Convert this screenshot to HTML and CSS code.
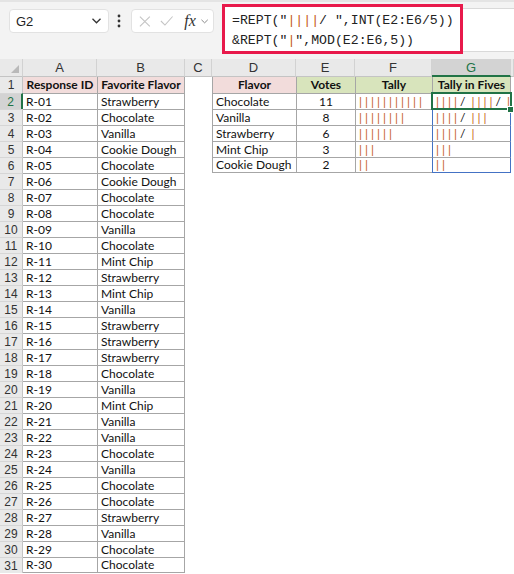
FILE: index.html
```html
<!DOCTYPE html>
<html lang="en">
<head>
    <meta charset="UTF-8">
    <meta name="viewport" content="width=device-width, initial-scale=1.0">
    <title>Tally in Fives</title>
    <link rel="stylesheet" href="styles.css">
</head>
<body>
    <div class="toolbar">
        <div class="name-box">
            <span>G2</span>
            <svg width="9" height="6" viewBox="0 0 9 6"><polyline points="0.5,0.8 4.5,4.8 8.5,0.8" fill="none" stroke="#333" stroke-width="1.3"/></svg>
        </div>
        <svg class="dots" width="4" height="14" viewBox="0 0 4 14">
            <circle cx="2" cy="2" r="1.4"/><circle cx="2" cy="7" r="1.4"/><circle cx="2" cy="12" r="1.4"/>
        </svg>
        <div class="fx-box">
            <svg width="13" height="13" viewBox="0 0 13 13"><path d="M1 1 L12 12 M12 1 L1 12" stroke="#c4c4c4" stroke-width="1.2" fill="none"/></svg>
            <svg width="15" height="12" viewBox="0 0 15 12"><polyline points="1,6 5.5,10.5 14,1" stroke="#c4c4c4" stroke-width="1.2" fill="none"/></svg>
            <span class="fx">fx</span>
            <svg width="8" height="5" viewBox="0 0 8 5"><polyline points="0.5,0.6 4,4 7.5,0.6" fill="none" stroke="#888" stroke-width="1.1"/></svg>
        </div>
        <div class="formula">
            <div class="formula-text">
                <div class="line">=REPT("<span class="pipe">||||</span>/ ",INT(E2:E6/5))</div>
                <div class="line">&amp;REPT("<span class="pipe">|</span>",MOD(E2:E6,5))</div>
            </div>
            <div class="formula-rest"></div>
        </div>
    </div>

    <table class="sheet">
        <colgroup>
            <col style="width: 23px">
            <col style="width: 74px">
            <col style="width: 88px">
            <col style="width: 27px">
            <col style="width: 84px">
            <col style="width: 59px">
            <col style="width: 77px">
            <col style="width: 79px">
            <col style="width: 3px">
        </colgroup>
        <thead>
            <tr>
                <th class="corner"><svg width="8" height="8" viewBox="0 0 8 8"><polygon points="8,0 8,8 0,8" fill="#b9b9b9"/></svg></th>
                <th class="col-head">A</th>
                <th class="col-head">B</th>
                <th class="col-head">C</th>
                <th class="col-head">D</th>
                <th class="col-head">E</th>
                <th class="col-head">F</th>
                <th class="col-head selected">G</th>
                <th class="col-head"></th>
            </tr>
        </thead>
        <tbody id="rows"></tbody>
    </table>

    <script>
        const responses = [
            ['R-01', 'Strawberry'], ['R-02', 'Chocolate'], ['R-03', 'Vanilla'],
            ['R-04', 'Cookie Dough'], ['R-05', 'Chocolate'], ['R-06', 'Cookie Dough'],
            ['R-07', 'Chocolate'], ['R-08', 'Chocolate'], ['R-09', 'Vanilla'],
            ['R-10', 'Chocolate'], ['R-11', 'Mint Chip'], ['R-12', 'Strawberry'],
            ['R-13', 'Mint Chip'], ['R-14', 'Vanilla'], ['R-15', 'Strawberry'],
            ['R-16', 'Strawberry'], ['R-17', 'Strawberry'], ['R-18', 'Chocolate'],
            ['R-19', 'Vanilla'], ['R-20', 'Mint Chip'], ['R-21', 'Vanilla'],
            ['R-22', 'Vanilla'], ['R-23', 'Chocolate'], ['R-24', 'Vanilla'],
            ['R-25', 'Chocolate'], ['R-26', 'Chocolate'], ['R-27', 'Strawberry'],
            ['R-28', 'Vanilla'], ['R-29', 'Chocolate'], ['R-30', 'Chocolate']
        ];
        const flavors = ['Chocolate', 'Vanilla', 'Strawberry', 'Mint Chip', 'Cookie Dough'];
        const votes = flavors.map(f => responses.filter(r => r[1] === f).length);

        function pipes(n) {
            return n > 0 ? '<span class="pipe">' + '|'.repeat(n) + '</span>' : '';
        }

        // =REPT("||||/ ",INT(n/5)) & REPT("|",MOD(n,5))
        function fives(n) {
            let out = '';
            for (let i = 0; i < Math.floor(n / 5); i++) {
                out += pipes(4) + '/ ';
            }
            return out + pipes(n % 5);
        }

        function cell(text, classes) {
            return `<td class="${classes}">${text}</td>`;
        }

        let html = '';
        for (let r = 1; r <= 31; r++) {
            const top = r > 1 ? ' bt' : '';
            html += `<tr><th class="row-head${r === 2 ? ' selected' : ''}">${r}</th>`;

            // responses list A:B
            const last = r === 31 ? ' bb' : '';
            if (r === 1) {
                html += cell('Response ID', 'head pink' + last);
                html += cell('Favorite Flavor', 'head pink bl br' + last);
            } else {
                html += cell(responses[r - 2][0], 'grid' + top + last);
                html += cell(responses[r - 2][1], 'grid bl br' + top + last);
            }

            html += cell('', '');

            // summary D:G
            if (r === 1) {
                html += cell('Flavor', 'head pink bl');
                html += cell('Votes', 'head green bl');
                html += cell('Tally', 'head green bl');
                html += cell('Tally in Fives', 'head green bl br');
            } else if (r <= 6) {
                const n = votes[r - 2];
                const end = r === 6 ? ' bb' : '';
                html += cell(flavors[r - 2], 'grid bl' + top + end);
                html += cell(n, 'grid num bl' + top + end);
                html += cell(pipes(n), 'grid tally bl' + top + end);
                html += cell(fives(n), 'grid tally bl br spill' + top + end + (r === 2 ? ' active' : ''));
            } else {
                html += cell('', '') + cell('', '') + cell('', '') + cell('', '');
            }

            html += cell('', '') + '</tr>';
        }
        document.getElementById('rows').innerHTML = html;
    </script>
</body>
</html>
```

FILE: styles.css
```css
body {
    margin: 0;
    background-color: #ffffff;
    font-family: "Liberation Sans", Arial, sans-serif;
    color: #222222;
    width: 514px;
    height: 574px;
    overflow: hidden;
}

/* formula bar */
.toolbar {
    display: flex;
    align-items: flex-start;
    height: 59px;
    box-sizing: border-box;
    padding-left: 9px;
    background-color: #f3f3f3;
    border-top: 2px solid #e4e4e4;
}

.name-box {
    display: flex;
    align-items: center;
    justify-content: space-between;
    width: 100px;
    height: 24px;
    margin-top: 7px;
    padding: 0 7px 0 6px;
    box-sizing: border-box;
    background-color: #ffffff;
    border: 1px solid #e2e2e2;
    border-radius: 4px;
    font-size: 13px;
    color: #1f1f1f;
}

.dots {
    margin: 12px 0 0 8px;
    fill: #333333;
}

.fx-box {
    display: flex;
    align-items: center;
    width: 83px;
    height: 24px;
    margin: 7px 0 0 10px;
    padding: 0 5px 0 7px;
    box-sizing: border-box;
    background-color: #ffffff;
    border: 1px solid #e2e2e2;
    border-radius: 4px;
    gap: 9px;
}

.fx-box .fx {
    font-family: "Liberation Serif", "Times New Roman", serif;
    font-style: italic;
    font-size: 16px;
    color: #333333;
    margin-left: 2px;
    margin-right: -4px;
}

.formula {
    display: flex;
    flex: 1;
    margin-left: 8px;
}

.formula-text {
    width: 241px;
    height: 50px;
    margin-top: 2px;
    padding: 4px 0 0 7px;
    box-sizing: border-box;
    background-color: #ffffff;
    border: 3px solid #e8194b;
    font-family: "Liberation Mono", "Courier New", monospace;
    font-size: 13.2px;
    line-height: 20px;
    color: #222222;
}

.formula-text .line {
    white-space: pre;
}

.formula-rest {
    flex: 1;
    height: 44px;
    margin-top: 6px;
    box-sizing: border-box;
    background-color: #ffffff;
    border-top: 1px solid #d9d9d9;
    border-bottom: 1px solid #d9d9d9;
}

.pipe {
    color: #c55a11;
}

/* grid */
.sheet {
    border-collapse: separate;
    border-spacing: 0;
    table-layout: fixed;
    width: 514px;
}

.sheet th {
    padding: 0;
    font-weight: normal;
    background-color: #e9e9e9;
    color: #333333;
    font-size: 12px;
}

.corner {
    height: 18px;
    box-sizing: border-box;
    text-align: right;
    vertical-align: bottom;
    padding: 0 3px 3px 0 !important;
    border-right: 1px solid #d2d2d2;
    border-bottom: 1px solid #c4c4c4;
}

.corner svg {
    display: block;
    margin-left: auto;
}

.col-head {
    height: 18px;
    box-sizing: border-box;
    font-size: 13px !important;
    border-right: 1px solid #d2d2d2;
    border-bottom: 1px solid #c4c4c4;
}

.col-head.selected {
    background-color: #d3d3d3 !important;
    color: #217346 !important;
    border-bottom: 2px solid #217346;
}

.row-head {
    height: 16px;
    box-sizing: border-box;
    border-top: 1px solid #d6d6d6;
    border-right: 1px solid #c4c4c4;
    text-align: center;
}

tbody tr:first-child .row-head {
    border-top: none;
}

.row-head.selected {
    background-color: #d3d3d3 !important;
    color: #217346 !important;
    border-right: 2px solid #217346;
}

.sheet td {
    height: 16px;
    padding: 0 3px;
    box-sizing: border-box;
    font-family: Lato, "Liberation Sans", sans-serif;
    font-size: 12px;
    line-height: 14px;
    color: #111111;
    white-space: pre;
}

.head {
    font-weight: bold;
    text-align: center;
}

.pink {
    background-color: #f2dcdb;
}

.green {
    background-color: #d8e4bc;
}

.bt { border-top: 1px solid #a6a6a6; }
.bl { border-left: 1px solid #a6a6a6; }
.br { border-right: 1px solid #a6a6a6; }
.bb { border-bottom: 1px solid #a6a6a6; }

.num {
    text-align: center;
}

.tally {
    word-spacing: 3px;
}

.tally .pipe {
    letter-spacing: 3px;
}

.spill {
    border-left-color: #4472c4;
    border-right-color: #4472c4;
}

.spill.bb {
    border-bottom-color: #4472c4;
}

.active {
    position: relative;
    outline: 2px solid #217346;
    outline-offset: -1px;
}

.active::after {
    content: "";
    position: absolute;
    right: -4px;
    bottom: -4px;
    width: 5px;
    height: 5px;
    background-color: #217346;
    border: 1px solid #ffffff;
}
```
